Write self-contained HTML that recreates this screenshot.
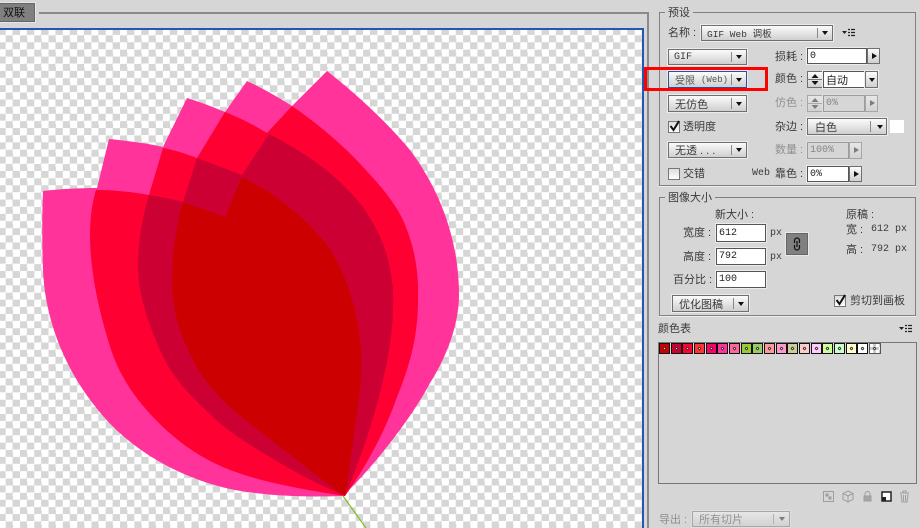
<!DOCTYPE html>
<html><head><meta charset="utf-8"><style>
html,body{margin:0;padding:0}
body{width:920px;height:528px;position:relative;overflow:hidden;background:#d6d6d6;font-family:"Liberation Sans","Noto Sans CJK SC",sans-serif;font-size:11px;color:#3a3a3a}
div,span{position:absolute;box-sizing:border-box}
.t{white-space:nowrap;line-height:14px;height:14px}
.m{font-family:"Liberation Mono","Noto Sans CJK SC",monospace;font-size:10px}
.dd{border:1px solid #6f6f6f;background:linear-gradient(#fbfbfb,#cfcfcf);box-shadow:0 0 0 1px #ececec;white-space:pre;display:flex;align-items:center;padding-left:5px}
.dd i{position:absolute;top:2px;bottom:2px;width:1px;background:#888}
.dd b{position:absolute;top:50%;margin-top:-2px;margin-left:1px;width:0;height:0;border:3px solid transparent;border-top:4px solid #111;border-bottom:0}
.in{border:1px solid #555;background:#fff;display:flex;align-items:center;padding-left:2px;box-shadow:0 0 0 1px #ececec;color:#222;font-size:10px;font-family:"Liberation Mono",monospace}
.ar{border:1px solid #6f6f6f;background:linear-gradient(#fbfbfb,#cfcfcf)}
.ar:after{content:"";position:absolute;left:4px;top:4px;border:3px solid transparent;border-left:5px solid #111;border-right:0}
.sp{border:1px solid #6f6f6f;background:linear-gradient(#fbfbfb,#cfcfcf)}
.dis{opacity:.45}
.grp{border:1px solid #808080;box-shadow:0 1px 0 #eee}
.cb{width:12px;height:12px;border:1px solid #777;background:linear-gradient(#ddd,#fff)}
.sw{width:11px;height:11px;top:343px;border:1px solid #111}
.sw:after{content:"";position:absolute;left:3px;top:3px;width:3px;height:3px;background:#fff;border:1px solid #333;border-radius:1px;transform:rotate(45deg);box-sizing:border-box}
</style></head><body>

<!-- top bar -->
<div style="left:-2px;top:3px;width:37px;height:19px;background:#808080;border:1px solid #666;box-shadow:0 0 0 1px #e8e8e8"></div>
<div class="t" style="left:3px;top:6px;font-size:11px;color:#111">双联</div>
<div style="left:39px;top:12px;width:610px;height:2px;background:#8a8a8a"></div>

<!-- canvas -->
<div style="left:0;top:28px;width:644px;height:500px;background:#fff;border-top:2px solid #2456b4;border-right:2px solid #2456b4;overflow:hidden"></div>
<div style="left:0;top:30px;width:642px;height:498px;background-color:#fff;background-image:conic-gradient(#d6d6d6 25%,#fff 0 50%,#d6d6d6 0 75%,#fff 0);background-size:14.3px 14.3px;background-position:-8.65px -2px"></div>
<div style="left:647px;top:13px;width:2px;height:515px;background:#8a8a8a"></div>

<svg style="position:absolute;left:0;top:0" width="642" height="528" viewBox="0 0 642 528">
<path d="M343 496 L366 528" stroke="#7fbf2a" stroke-width="1.2" fill="none"/>
<path fill="#ff3399" d="M43 191 C60 189 80 188 97 188 L109 139 C128 141 146 143 163 147 L187 98 C200 102 213 107 225 112 L247 81 C262 88 278 97 292 106 L327 71 C355 93 385 120 410 150 C440 190 459 240 459 295 C459 325 446 358 430 383 C415 412 380 460 343 496 C310 497 270 497 230 489 C180 478 130 450 98 410 C65 370 45 320 43 270 C42 245 42 215 43 191 Z"/>
<path fill="#ff0033" d="M96 190 C115 190 132 192 149 195 L163 148 C175 150 186 154 197 158 L225 112 C240 118 254 125 267 133 L292 106 C318 124 343 145 363 167 C380 185 395 203 403 220 C414 245 419 270 418 300 C418 340 408 370 397 397 C385 432 365 468 345 496 C300 489 262 482 230 470 C200 458 180 443 163 427 C135 400 118 375 108 340 C96 300 90 265 90 235 C90 218 92 204 96 190 Z"/>
<path fill="#cc0033" d="M149 195 C161 197 172 199 183 202 L197 158 L242 175 L269 134 C285 142 299 151 313 160 C332 174 350 190 363 207 C380 232 390 255 393 290 C394 325 390 350 383 380 C374 420 360 460 345 496 C320 485 300 475 280 463 C255 448 232 435 213 417 C190 395 172 378 160 350 C148 322 138 295 138 265 C138 240 143 215 149 195 Z"/>
<path fill="#cc0000" d="M183 202 L225 217 L242 177 C256 184 268 191 280 200 C296 212 311 226 323 240 C338 258 352 290 358 325 C363 355 362 380 358 405 C354 435 350 465 345 496 C325 482 312 472 297 460 C272 440 250 425 230 407 C212 390 200 375 193 360 C180 335 172 310 172 280 C172 255 176 225 183 202 Z"/>
</svg>

<!-- Preset group -->
<div class="grp" style="left:659px;top:12px;width:257px;height:174px"></div>
<div class="t" style="left:665px;top:6px;background:#d6d6d6;padding:0 3px">预设</div>
<div class="t" style="left:668px;top:26px">名称 :</div>
<div class="dd m" style="left:701px;top:25px;width:132px;height:16px;font-size:9.5px">GIF Web 调板<i style="left:115px"></i><b style="left:119px"></b></div>
<svg style="position:absolute;left:842px;top:28px" width="14" height="10"><path d="M0 3h5l-2.500 3z" fill="#222"/><path d="M6 1.500h2M9 1.500h4M6 4.500h2M9 4.500h4M6 7.500h2M9 7.500h4" stroke="#222" stroke-width="1.200"/></svg>

<div class="dd m" style="left:668px;top:49px;width:79px;height:16px">GIF<i style="left:62px"></i><b style="left:66px"></b></div>
<div class="t" style="left:775px;top:50px">损耗 :</div>
<div class="in" style="left:807px;top:48px;width:60px;height:16px">0</div>
<div class="ar" style="left:867px;top:48px;width:13px;height:16px"></div>

<div class="dd m" style="left:668px;top:71px;width:79px;height:17px;border-color:#2a4f9f;padding-left:6px;color:#555;font-size:9px"><span style="position:static;font-size:10px">受限 </span>(Web)<i style="left:62px"></i><b style="left:66px"></b></div>
<div style="left:644px;top:67px;width:124px;height:24px;border:3px solid #ff0000"></div>
<div class="t" style="left:775px;top:72px">颜色 :</div>
<div class="sp" style="left:807px;top:71px;width:16px;height:17px"></div>
<svg style="position:absolute;left:807px;top:71px" width="16" height="17"><path d="M1 8.500h14" stroke="#777"/><path d="M8 3l3.500 4h-7zM8 14l3.500-4h-7z" fill="#111"/></svg>
<div class="in" style="left:823px;top:71px;width:42px;height:17px;font-family:'Liberation Sans','Noto Sans CJK SC',sans-serif;font-size:11px">自动</div>
<div class="dd" style="left:865px;top:71px;width:13px;height:17px;padding:0"><b style="left:2px"></b></div>

<div class="dd" style="left:668px;top:95px;width:79px;height:17px;padding-left:6px">无仿色<i style="left:62px"></i><b style="left:66px"></b></div>
<div class="t dis" style="left:775px;top:96px">仿色 :</div>
<div class="dis">
<div class="sp" style="left:807px;top:95px;width:16px;height:17px"></div>
<svg style="position:absolute;left:807px;top:95px" width="16" height="17"><path d="M1 8.500h14" stroke="#777"/><path d="M8 3l3.500 4h-7zM8 14l3.500-4h-7z" fill="#111"/></svg>
<div class="in" style="left:823px;top:95px;width:42px;height:17px;background:#d6d6d6">0%</div>
<div class="ar" style="left:865px;top:95px;width:13px;height:17px"></div>
</div>

<div class="cb" style="left:668px;top:121px"></div>
<svg style="position:absolute;left:668px;top:119px" width="14" height="14"><path d="M2.500 7l3 4 5.500-9" stroke="#111" stroke-width="2" fill="none"/></svg>
<div class="t" style="left:683px;top:120px">透明度</div>
<div class="t" style="left:775px;top:120px">杂边 :</div>
<div class="dd" style="left:807px;top:118px;width:80px;height:17px;padding-left:7px">白色<i style="left:62px"></i><b style="left:68px"></b></div>
<div style="left:890px;top:120px;width:14px;height:13px;background:#fff"></div>

<div class="dd" style="left:668px;top:142px;width:79px;height:16px;padding-left:6px">无透 . . .<i style="left:62px"></i><b style="left:66px"></b></div>
<div class="t dis" style="left:775px;top:143px">数量 :</div>
<div class="dis">
<div class="in" style="left:807px;top:142px;width:42px;height:17px;background:#d6d6d6">100%</div>
<div class="ar" style="left:849px;top:142px;width:13px;height:17px"></div>
</div>

<div class="cb" style="left:668px;top:168px"></div>
<div class="t" style="left:683px;top:167px">交错</div>
<div class="t m" style="left:752px;top:167px">Web</div>
<div class="t" style="left:775px;top:167px">靠色 :</div>
<div class="in" style="left:807px;top:166px;width:42px;height:16px">0%</div>
<div class="ar" style="left:849px;top:166px;width:13px;height:16px"></div>

<!-- Image size -->
<div class="grp" style="left:659px;top:197px;width:257px;height:119px"></div>
<div class="t" style="left:665px;top:191px;background:#d6d6d6;padding:0 3px">图像大小</div>
<div class="t" style="left:715px;top:208px">新大小 :</div>
<div class="t" style="left:683px;top:226px">宽度 :</div>
<div class="in" style="left:716px;top:224px;width:50px;height:18px">612</div>
<div class="t m" style="left:770px;top:227px">px</div>
<div class="t" style="left:683px;top:250px">高度 :</div>
<div class="in" style="left:716px;top:248px;width:50px;height:17px">792</div>
<div class="t m" style="left:770px;top:251px">px</div>
<div class="t" style="left:673px;top:273px">百分比 :</div>
<div class="in" style="left:716px;top:271px;width:50px;height:17px">100</div>
<div style="left:786px;top:233px;width:22px;height:22px;background:#808080;border:1px solid #666;box-shadow:0 0 0 1px #e8e8e8"></div>
<svg style="position:absolute;left:786px;top:233px" width="22" height="22"><path d="M8.500 10V7.500a2.500 2.500 0 0 1 5 0V10M8.500 12v2.500a2.500 2.500 0 0 0 5 0V12M11 8v6" stroke="#111" stroke-width="1.200" fill="none"/></svg>
<div class="t" style="left:846px;top:208px">原稿 :</div>
<div class="t" style="left:846px;top:223px">宽 :</div>
<div class="t m" style="left:871px;top:223px">612 px</div>
<div class="t" style="left:846px;top:243px">高 :</div>
<div class="t m" style="left:871px;top:243px">792 px</div>
<div class="dd" style="left:672px;top:295px;width:77px;height:17px;padding-left:6px">优化图稿<i style="left:60px"></i><b style="left:64px"></b></div>
<div class="cb" style="left:834px;top:295px"></div>
<svg style="position:absolute;left:834px;top:293px" width="14" height="14"><path d="M2.500 7l3 4 5.500-9" stroke="#111" stroke-width="2" fill="none"/></svg>
<div class="t" style="left:850px;top:294px">剪切到画板</div>

<!-- Color table -->
<div class="t" style="left:658px;top:322px">颜色表</div>
<svg style="position:absolute;left:899px;top:324px" width="14" height="10"><path d="M0 3h5l-2.500 3z" fill="#222"/><path d="M6 1.500h2M9 1.500h4M6 4.500h2M9 4.500h4M6 7.500h2M9 7.500h4" stroke="#222" stroke-width="1.200"/></svg>
<div style="left:658px;top:342px;width:259px;height:142px;border:1px solid #777"></div>
<div class="sw" style="left:659px;background:#cc0000"></div>
<div class="sw" style="left:671px;background:#cc0033"></div>
<div class="sw" style="left:682px;background:#ff0033"></div>
<div class="sw" style="left:694px;background:#ff3333"></div>
<div class="sw" style="left:706px;background:#ff0066"></div>
<div class="sw" style="left:717px;background:#ff3399"></div>
<div class="sw" style="left:729px;background:#ff6699"></div>
<div class="sw" style="left:741px;background:#99cc33"></div>
<div class="sw" style="left:752px;background:#99cc66"></div>
<div class="sw" style="left:764px;background:#ff9999"></div>
<div class="sw" style="left:776px;background:#ff99cc"></div>
<div class="sw" style="left:787px;background:#cccc99"></div>
<div class="sw" style="left:799px;background:#ffcccc"></div>
<div class="sw" style="left:811px;background:#ffccff"></div>
<div class="sw" style="left:822px;background:#ccff99"></div>
<div class="sw" style="left:834px;background:#ccffcc"></div>
<div class="sw" style="left:846px;background:#ffffcc"></div>
<div class="sw" style="left:857px;background:#ffffff"></div>
<div class="sw" style="left:869px;width:12px;background-color:#fff;background-image:conic-gradient(#ccc 25%,#fff 0 50%,#ccc 0 75%,#fff 0);background-size:6px 6px;border-color:#555"></div>

<!-- bottom icons -->
<svg style="position:absolute;left:820px;top:488px" width="95" height="16">
<g opacity=".5" fill="none" stroke="#666"><rect x="3.500" y="3.500" width="10" height="10"/><path d="M6 6h2v2H6zM9 9h2v2H9z" fill="#777"/><path d="M28 3l5 2.500v6L28 14l-5-2.500v-6zM23 5.500L28 8l5-2.500M28 8v6"/><path d="M45 8V6a2.500 2.500 0 0 1 5 0v2"/><rect x="44" y="8" width="7" height="5" fill="#777"/><path d="M80 5h9M83 5V3h3v2M81 6l1 8h5l1-8M83.500 7v6M85.500 7v6"/></g>
<rect x="62" y="4" width="9" height="9" fill="#fff" stroke="#222" stroke-width="1.500"/><path d="M62 9h4v4h-4z" fill="#222"/>
</svg>
<div class="t dis" style="left:659px;top:513px">导出 :</div>
<div class="dd" style="left:692px;top:511px;width:98px;height:16px;padding-left:6px;opacity:.45">所有切片<i style="left:80px"></i><b style="left:85px"></b></div>

</body></html>
